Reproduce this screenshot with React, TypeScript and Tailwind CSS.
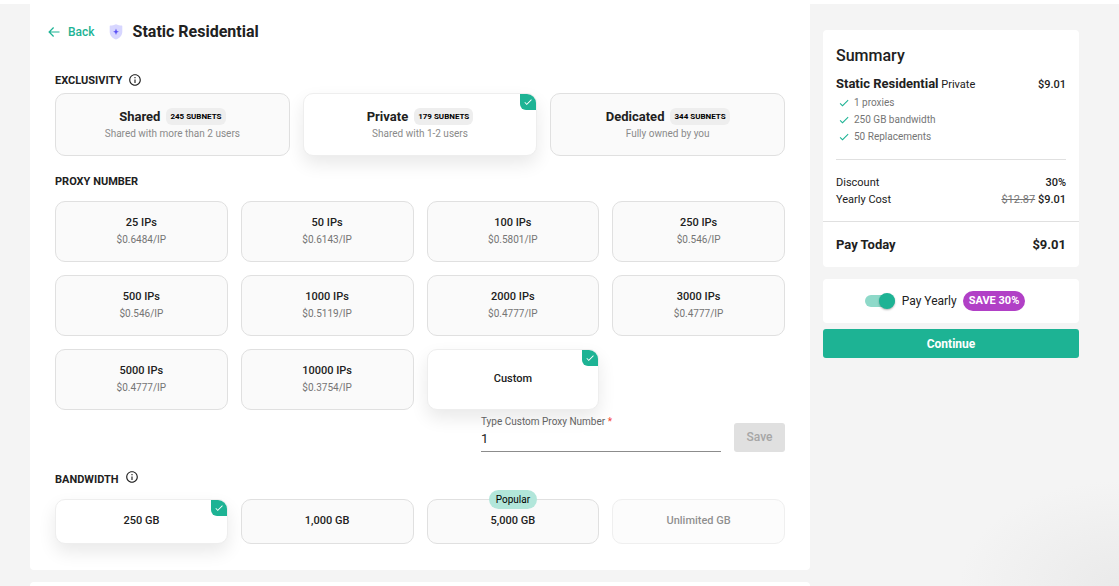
import { useState } from "react";
import type { ReactNode } from "react";
import clsx from "clsx";
import { MdCheck, MdInfoOutline } from "react-icons/md";

const exclusivityOptions = [
  { id: "shared", name: "Shared", subnets: 245, note: "Shared with more than 2 users" },
  { id: "private", name: "Private", subnets: 179, note: "Shared with 1-2 users" },
  { id: "dedicated", name: "Dedicated", subnets: 344, note: "Fully owned by you" },
];

const proxyOptions = [
  { id: "25", price: "$0.6484/IP" },
  { id: "50", price: "$0.6143/IP" },
  { id: "100", price: "$0.5801/IP" },
  { id: "250", price: "$0.546/IP" },
  { id: "500", price: "$0.546/IP" },
  { id: "1000", price: "$0.5119/IP" },
  { id: "2000", price: "$0.4777/IP" },
  { id: "3000", price: "$0.4777/IP" },
  { id: "5000", price: "$0.4777/IP" },
  { id: "10000", price: "$0.3754/IP" },
];

const bandwidthOptions = [
  { id: "250", name: "250 GB" },
  { id: "1000", name: "1,000 GB" },
  { id: "5000", name: "5,000 GB", popular: true },
  { id: "unlimited", name: "Unlimited GB", disabled: true },
];

const features = ["1 proxies", "250 GB bandwidth", "50 Replacements"];

type OptionCardProps = {
  group: string;
  value: string;
  selected: boolean;
  disabled?: boolean;
  className?: string;
  onSelect: (value: string) => void;
  children: ReactNode;
};

function OptionCard({ group, value, selected, disabled, className, onSelect, children }: OptionCardProps) {
  return (
    <label
      className={clsx(
        "relative flex flex-col items-center rounded-[10px] border text-center",
        selected
          ? "border-[#eeeeee] bg-white shadow-[0_8px_18px_rgba(0,0,0,0.09)]"
          : "border-[#e0e0e0] bg-[#fafafa]",
        disabled ? "opacity-50" : "cursor-pointer",
        className
      )}
    >
      <input
        type="radio"
        name={group}
        value={value}
        checked={selected}
        disabled={disabled}
        onChange={() => onSelect(value)}
        className="sr-only"
      />
      {children}
      {selected && (
        <span className="absolute top-0 right-0 flex size-4 items-center justify-center rounded-tr-[9px] rounded-bl-md bg-[#1db394] text-white">
          <MdCheck size={10} />
        </span>
      )}
    </label>
  );
}

function ShieldIcon() {
  return (
    <svg width="14" height="16" viewBox="0 0 14 16" aria-hidden="true">
      <path
        d="M7 .3C5.3 1.3 3 1.5 1.3 1.5c-.4 0-.6.3-.6.7v5.6c0 3.6 2.6 6.4 6.3 7.8 3.7-1.4 6.3-4.2 6.3-7.8V2.2c0-.4-.2-.7-.6-.7C11 1.5 8.7 1.3 7 .3z"
        fill="#d7d6ff"
      />
      <path d="M7 4.600l.9 2.400 2 .8-2 .8L7 11l-.9-2.400-2-.8 2-.8z" fill="#5a50f5" />
    </svg>
  );
}

function BackIcon() {
  return (
    <svg width="12" height="12" viewBox="0 0 12 12" fill="none" stroke="currentColor" strokeWidth="1.2" aria-hidden="true">
      <path d="M11.500 6H1.200M5.600 1.500L1.100 6l4.500 4.500" />
    </svg>
  );
}

export default function App() {
  const [exclusivity, setExclusivity] = useState("private");
  const [proxies, setProxies] = useState("custom");
  const [bandwidth, setBandwidth] = useState("250");
  const [customNumber, setCustomNumber] = useState("1");
  const [yearly, setYearly] = useState(true);

  return (
    <div className="flex min-h-screen flex-col bg-white pt-1 font-['Roboto',sans-serif] text-[#212121]">
      <div className="flex grow gap-[13px] bg-[#f4f4f4] bg-[radial-gradient(ellipse_160px_105px_at_bottom_right,#eaeaea,#f4f4f4)] pr-10 pl-[30px]">
        <main className="flex min-w-0 flex-1 flex-col gap-3">
          <form className="rounded-b bg-white px-[25px] pb-[26px]" onSubmit={(e) => e.preventDefault()}>
            <header className="-ml-[7px] flex h-[55px] items-center">
              <a href="#" className="flex items-center gap-2 text-[12px] font-medium text-[#1db394]">
                <BackIcon />
                Back
              </a>
              <span className="ml-[14px]">
                <ShieldIcon />
              </span>
              <h1 className="ml-[10px] text-[16px] font-bold">Static Residential</h1>
            </header>

            <section className="pt-2">
              <h2 className="flex h-[26px] items-end gap-[6px] pb-1 text-[11px] leading-4 font-bold uppercase">
                Exclusivity
                <span className="flex h-4 items-start">
                  <MdInfoOutline size={14} />
                </span>
              </h2>
              <div className="grid grid-cols-3 gap-[13px]">
                {exclusivityOptions.map((option) => (
                  <OptionCard
                    key={option.id}
                    group="exclusivity"
                    value={option.id}
                    selected={exclusivity === option.id}
                    onSelect={setExclusivity}
                    className="h-[63px] pt-[14px]"
                  >
                    <span className="flex items-center gap-[6px] text-[13px] leading-[17px] font-bold">
                      {option.name}
                      <span className="rounded-md bg-[#eeeeee] px-1 text-[8px] leading-[17px] font-bold text-black">
                        {option.subnets} SUBNETS
                      </span>
                    </span>
                    <span className="text-[10px] leading-[17px] text-[#8a8a8a]">{option.note}</span>
                  </OptionCard>
                ))}
              </div>
            </section>

            <section className="pt-[14px]">
              <h2 className="flex h-[31px] items-start pt-1 text-[11px] leading-4 font-bold uppercase">Proxy number</h2>
              <div className="grid grid-cols-4 gap-[13px]">
                {proxyOptions.map((option) => (
                  <OptionCard
                    key={option.id}
                    group="proxies"
                    value={option.id}
                    selected={proxies === option.id}
                    onSelect={setProxies}
                    className="h-[61px] pt-3"
                  >
                    <span className="text-[11px] leading-[17px] font-medium">{option.id} IPs</span>
                    <span className="text-[10px] leading-[17px] text-[#757575]">{option.price}</span>
                  </OptionCard>
                ))}
                <OptionCard
                  group="proxies"
                  value="custom"
                  selected={proxies === "custom"}
                  onSelect={setProxies}
                  className="h-[61px] justify-center text-[11px] font-medium"
                >
                  Custom
                </OptionCard>
              </div>
              <div className="flex items-end justify-end gap-[13px] pt-1">
                <div className="w-60">
                  <label htmlFor="custom-number" className="block text-[10px] leading-4 text-[#666666]">
                    Type Custom Proxy Number <span className="text-[#f44336]">*</span>
                  </label>
                  <input
                    id="custom-number"
                    type="text"
                    inputMode="numeric"
                    value={customNumber}
                    onChange={(e) => setCustomNumber(e.target.value)}
                    className="block h-[22px] w-full border-b border-[#8c8c8c] pb-1 text-[13px] outline-none"
                  />
                </div>
                <button
                  type="button"
                  disabled
                  className="h-[29px] w-[51px] rounded-[3px] bg-[#e0e0e0] pb-[2px] text-[12px] font-medium text-[#a6a6a6]"
                >
                  Save
                </button>
              </div>
            </section>

            <section className="pt-[14px]">
              <h2 className="flex h-[33px] items-end gap-[6px] pb-[11px] text-[11px] leading-4 font-bold uppercase">
                Bandwidth
                <span className="flex h-[18px] items-start">
                  <MdInfoOutline size={14} />
                </span>
              </h2>
              <div className="grid grid-cols-4 gap-[13px]">
                {bandwidthOptions.map((option) => (
                  <OptionCard
                    key={option.id}
                    group="bandwidth"
                    value={option.id}
                    selected={bandwidth === option.id}
                    disabled={option.disabled}
                    onSelect={setBandwidth}
                    className="h-[45px] justify-center text-[11px] font-medium"
                  >
                    {option.name}
                    {option.popular && (
                      <span className="absolute -top-[10px] rounded-full bg-[#b2e6da] px-[7px] text-[10px] leading-[19px] font-normal text-black">
                        Popular
                      </span>
                    )}
                  </OptionCard>
                ))}
              </div>
            </section>
          </form>

          <div className="grow rounded-t bg-white" />
        </main>

        <aside className="w-64 shrink-0 pt-[26px]">
          <section className="rounded bg-white">
            <div className="px-[13px] pt-[13px]">
              <h2 className="text-[16px] leading-[26px] font-medium">Summary</h2>
              <div className="flex items-center justify-between pt-[6px] text-[11px] leading-[18px]">
                <p>
                  <strong className="text-[13px] font-bold">Static Residential</strong> Private
                </p>
                <span className="font-medium">$9.01</span>
              </div>
              <ul className="border-b border-[#e0e0e0] pb-[14px] pl-[2px]">
                {features.map((feature) => (
                  <li key={feature} className="flex items-center gap-1 text-[10px] leading-[17px] text-[#757575]">
                    <MdCheck size={12} className="text-[#1db394]" />
                    {feature}
                  </li>
                ))}
              </ul>
              <dl className="grid grid-cols-[1fr_auto] pt-[14px] pb-[13px] text-[11px] leading-[17px]">
                <dt>Discount</dt>
                <dd className="text-right font-medium">30%</dd>
                <dt>Yearly Cost</dt>
                <dd className="text-right font-medium">
                  <s className="font-normal text-[#757575]">$12.87</s> $9.01
                </dd>
              </dl>
            </div>
            <div className="flex items-center justify-between border-t border-[#e0e0e0] px-[13px] text-[13px] leading-[45px] font-bold">
              <span>Pay Today</span>
              <span>$9.01</span>
            </div>
          </section>

          <section className="mt-3 flex h-11 items-center justify-center rounded bg-white pr-3">
            <label className="flex cursor-pointer items-center text-[12px]">
              <input
                type="checkbox"
                role="switch"
                checked={yearly}
                onChange={(e) => setYearly(e.target.checked)}
                className="peer sr-only"
              />
              <span className="flex h-3 w-[30px] items-center rounded-full bg-[#bdbdbd] peer-checked:justify-end peer-checked:bg-[#8ed9c9] [&>span]:bg-white peer-checked:[&>span]:bg-[#1db394]">
                <span className="size-4 shrink-0 rounded-full shadow-[0_1px_2px_rgba(0,0,0,0.3)]" />
              </span>
              <span className="pl-[7px]">Pay Yearly</span>
            </label>
            <span className="ml-[6px] rounded-full bg-[#b140c6] px-[6px] text-[11px] leading-5 font-bold text-white">SAVE 30%</span>
          </section>

          <button
            type="button"
            className="mt-[6px] block h-[29px] w-full rounded-[3px] bg-[#1db394] text-[12px] font-bold text-white"
          >
            Continue
          </button>
        </aside>
      </div>
    </div>
  );
}
